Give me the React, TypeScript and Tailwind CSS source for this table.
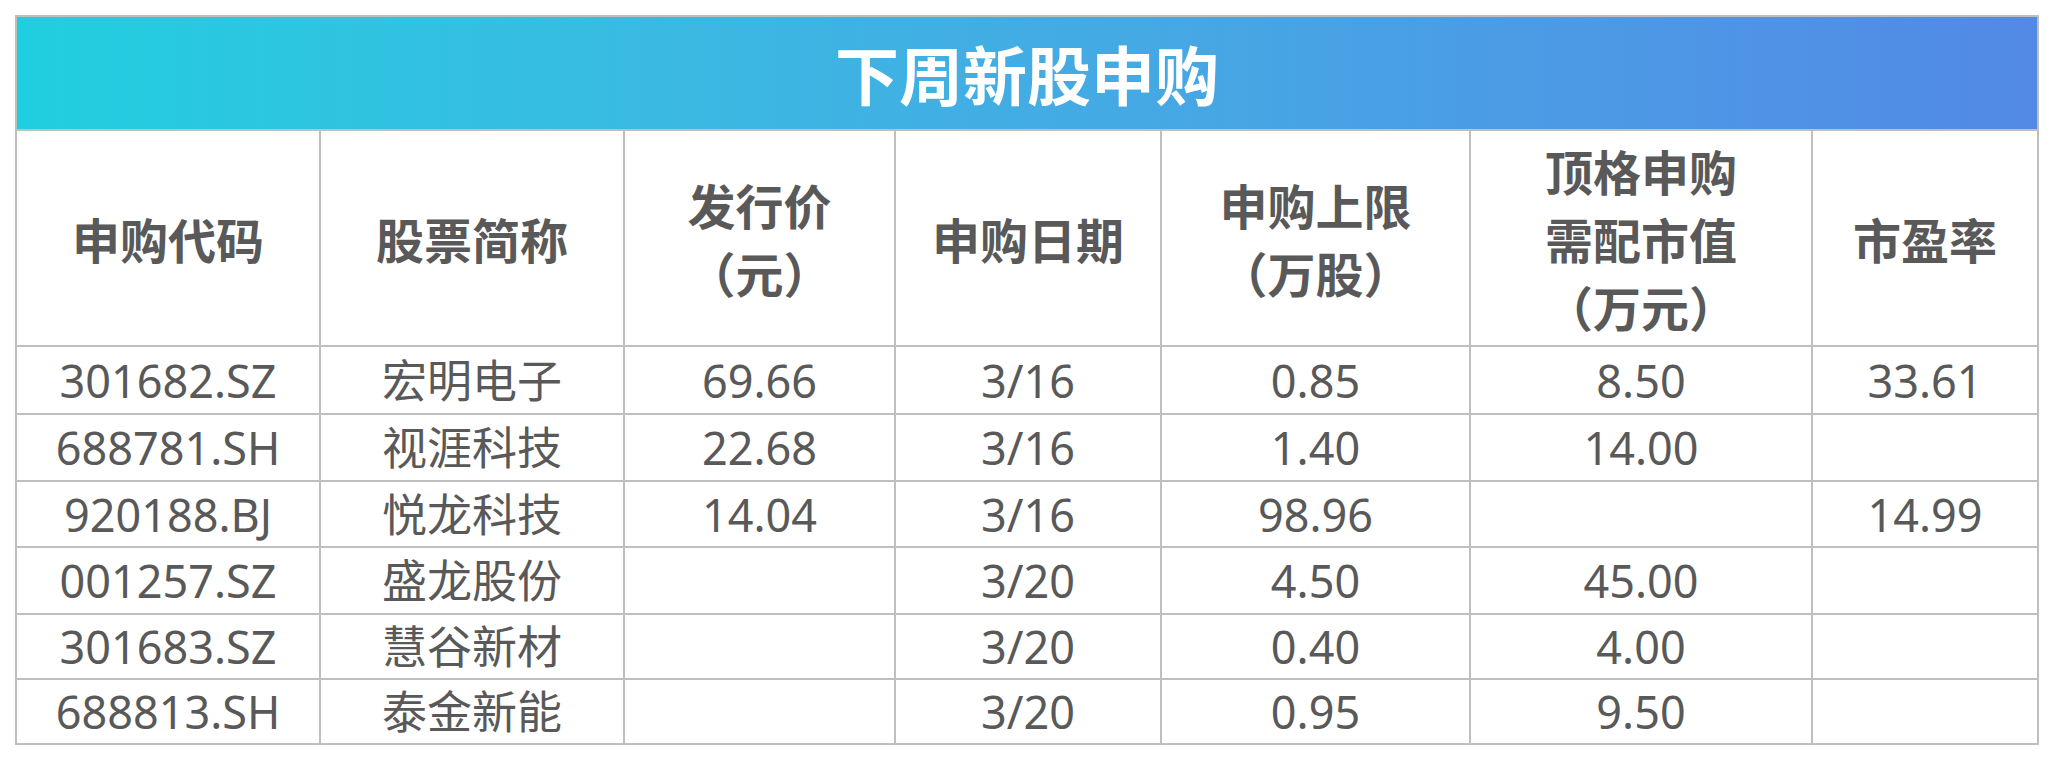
const cols = ['w-[302px]', 'w-[302px]', 'w-[269px]', 'w-[264px]', 'w-[307px]', 'w-[340px]', 'w-[224px]']

const headers: string[][] = [
  ['申购代码'],
  ['股票简称'],
  ['发行价', '（元）'],
  ['申购日期'],
  ['申购上限', '（万股）'],
  ['顶格申购', '需配市值', '（万元）'],
  ['市盈率'],
]

const rows: { h: string; cells: string[] }[] = [
  { h: 'h-[66px]', cells: ['301682.SZ', '宏明电子', '69.66', '3/16', '0.85', '8.50', '33.61'] },
  { h: 'h-[65px]', cells: ['688781.SH', '视涯科技', '22.68', '3/16', '1.40', '14.00', ''] },
  { h: 'h-[64px]', cells: ['920188.BJ', '悦龙科技', '14.04', '3/16', '98.96', '', '14.99'] },
  { h: 'h-[65px]', cells: ['001257.SZ', '盛龙股份', '', '3/20', '4.50', '45.00', ''] },
  { h: 'h-[63px]', cells: ['301683.SZ', '慧谷新材', '', '3/20', '0.40', '4.00', ''] },
  { h: 'h-[63px]', cells: ['688813.SH', '泰金新能', '', '3/20', '0.95', '9.50', ''] },
]

export default function App() {
  return (
    <div className="w-[2054px] h-[758px] bg-white pt-[15px] pl-[15px]">
      <div className="inline-flex flex-col gap-[2px] bg-[#bfbfbf] p-[2px]">
        {/* Title bar */}
        <div className="h-[112px] flex items-center justify-center bg-gradient-to-r from-[#1fcfdf] to-[#5289e6]">
          <span className="text-white text-[64px] font-bold leading-none font-['Noto_Sans_CJK_SC',sans-serif] -mt-[2px]">
            下周新股申购
          </span>
        </div>

        {/* Column headers */}
        <div className="flex gap-[2px] h-[214px]">
          {headers.map((lines, i) => (
            <div
              key={i}
              className={`${cols[i]} bg-white flex flex-col items-center justify-center text-[#595959] text-[48px] font-bold leading-[68px] font-['Noto_Sans_CJK_SC',sans-serif]`}
            >
              {lines.map((l) => (
                <span key={l}>{l}</span>
              ))}
            </div>
          ))}
        </div>

        {/* Data rows */}
        {rows.map((r) => (
          <div key={r.cells[0]} className={`flex gap-[2px] ${r.h}`}>
            {r.cells.map((c, i) => (
              <div
                key={i}
                className={`${cols[i]} bg-white flex items-center justify-center text-[#595959] text-[45px] leading-none font-['Noto_Sans','Noto_Sans_CJK_SC',sans-serif]`}
              >
                {c}
              </div>
            ))}
          </div>
        ))}
      </div>
    </div>
  )
}
